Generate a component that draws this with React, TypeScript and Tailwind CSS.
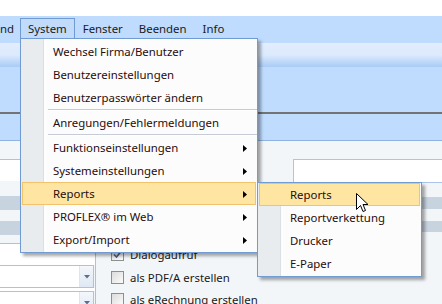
const font = { fontFamily: '"Noto Sans", "Open Sans", Arial, sans-serif' };

type Item = { label: string; sub?: boolean; active?: boolean; sepBefore?: boolean };

const systemItems: Item[] = [
  { label: "Wechsel Firma/Benutzer" },
  { label: "Benutzereinstellungen" },
  { label: "Benutzerpasswörter ändern" },
  { label: "Anregungen/Fehlermeldungen", sepBefore: true },
  { label: "Funktionseinstellungen", sub: true, sepBefore: true },
  { label: "Systemeinstellungen", sub: true },
  { label: "Reports", sub: true, active: true },
  { label: "PROFLEX® im Web", sub: true },
  { label: "Export/Import", sub: true },
];

const reportItems: Item[] = [
  { label: "Reports", active: true },
  { label: "Reportverkettung" },
  { label: "Drucker" },
  { label: "E-Paper" },
];

function Arrow() {
  return (
    <svg width="4" height="7" viewBox="0 0 4 7" className="absolute right-[8px] top-[8px]">
      <path d="M0 0 L4 3.5 L0 7 Z" fill="#000" />
    </svg>
  );
}

function MenuRow({ item }: { item: Item }) {
  return (
    <>
      {item.sepBefore && (
        <div className="flex h-[2px]">
          <div className="w-[27px]" />
          <div className="flex-1 border-t border-[#c5ccd6] bg-white" />
        </div>
      )}
      <div
        className={
          "relative mx-[1px] flex h-[23px] items-center border pl-[30px] " +
          (item.active ? "border-[#f2c36c] bg-[#fee5a2]" : "border-transparent")
        }
      >
        <span className="text-[11.4px] leading-none text-[#2a0c0c]">{item.label}</span>
        {item.sub && <Arrow />}
      </div>
    </>
  );
}

function Menu({ items, className }: { items: Item[]; className: string }) {
  return (
    <div
      className={
        "absolute border border-[#719bd3] bg-[#fcfcfc] shadow-[3px_3px_3px_rgba(0,0,0,0.35)] " + className
      }
    >
      <div className="absolute bottom-0 left-0 top-0 w-[23px] border-r border-[#dde0e3] bg-[#e9ecee]" />
      <div className="absolute bottom-0 left-[24px] top-0 w-[1px] bg-white" />
      <div className="relative">
        {items.map((item) => (
          <MenuRow key={item.label} item={item} />
        ))}
      </div>
    </div>
  );
}

function Checkbox({ checked }: { checked?: boolean }) {
  return (
    <div className="flex h-[13px] w-[13px] items-center justify-center border border-[#8e8f8f] bg-gradient-to-br from-[#dcdcdc] to-[#fbfbfb]">
      {checked && (
        <svg width="9" height="9" viewBox="0 0 9 9">
          <path d="M1 4.5 L3.5 7 L8 1.5" stroke="#4a5f80" strokeWidth="1.6" fill="none" />
        </svg>
      )}
    </div>
  );
}

function Combo() {
  return (
    <div className="mr-[1px] flex h-[23px] border border-l-0 border-[#a9c3e8] bg-white">
      <div className="flex-1" />
      <div className="flex w-[14px] items-center justify-center border-l border-[#dbe5f3] bg-gradient-to-b from-[#f4f7fb] to-[#dfe8f4]">
        <svg width="6" height="4" viewBox="0 0 6 4">
          <path d="M0 0 H6 L3 3.5 Z" fill="#5a6f90" />
        </svg>
      </div>
    </div>
  );
}

export default function App() {
  return (
    <div className="relative h-[304px] w-[442px] overflow-hidden bg-white" style={font}>
      <div className="h-[16px] bg-white" />

      {/* menu bar */}
      <div className="flex h-[27px] items-start bg-[#bfdbfe] pt-[2px] text-[11.4px] text-[#1a1a1a]">
        <div className="flex h-[21px] w-[20px] items-center">nd</div>
        <div className="flex h-[21px] items-center border border-b-0 border-[#6f9ad2] bg-[#c3dbfb] px-[7px]">System</div>
        <div className="flex h-[21px] items-center px-2">Fenster</div>
        <div className="flex h-[21px] items-center px-2">Beenden</div>
        <div className="flex h-[21px] items-center px-2">Info</div>
      </div>

      {/* toolbar area */}
      <div className="h-[24px] bg-gradient-to-b from-[#e2edfd] via-[#dceafd] to-[#a9cbf6]" />
      <div className="h-[45px] bg-[#bfdbfe]" />
      <div className="h-[2px] bg-[#737373]" />
      <div className="h-[27px] border-b border-[#8fb3e2] bg-[#bfdbfe]" />

      {/* content */}
      <div className="grid h-[162px] grid-cols-[96px_1fr]">
        <div className="flex flex-col border-r border-[#a6c2e9] bg-[#f3f6f9]">
          <div className="h-[18px]" />
          <div className="h-[22px] border-t border-[#a9c3e8] bg-white" />
          <div className="h-[15px]" />
          <div className="h-[14px] bg-[#c8d3e0]" />
          <div className="h-[11px]" />
          <div className="h-[14px] bg-[#c8d3e0]" />
          <div className="h-[8px]" />
          <div className="h-[22px] border-t border-[#a9c3e8] bg-white" />
          <Combo />
          <div className="h-[3px] bg-white" />
          <Combo />
        </div>

        <div className="flex flex-col bg-[#f3f6f9]">
          <div className="h-[18px]" />
          <div className="flex h-[24px]">
            <div className="w-[197px]" />
            <div className="flex-1 border border-r-0 border-[#abc5ea] bg-white" />
          </div>
          <div className="h-[14px]" />
          <div className="h-[12px] bg-[#c8d3e0]" />
          <div className="h-[12px]" />
          <div className="h-[11px] bg-[#c8d3e0]" />
          <div className="h-[16px]" />
          <div className="flex flex-col pl-[15px] text-[11.4px] text-[#1a1a1a]">
            {[
              { label: "Dialogaufruf", checked: true },
              { label: "als PDF/A erstellen" },
              { label: "als eRechnung erstellen" },
            ].map((c) => (
              <div key={c.label} className="flex h-[22.5px] items-start gap-[6px]">
                <Checkbox checked={c.checked} />
                <span className="leading-[13px]">{c.label}</span>
              </div>
            ))}
          </div>
        </div>
      </div>

      {/* open menus */}
      <Menu items={systemItems} className="left-[20px] top-[38px] w-[238px] pb-[1px] pt-[1px]" />
      <Menu items={reportItems} className="left-[257px] top-[182px] w-[165px] pb-[1px]" />

      {/* mouse cursor */}
      <svg width="13" height="21" viewBox="0 0 13 21" className="absolute left-[356px] top-[193px]">
        <path
          d="M0.5 0.5 L0.5 16.5 L4.5 12.5 L7 18.5 L9.5 17.5 L7 11.5 L12 11.5 Z"
          fill="#fff"
          stroke="#000"
          strokeWidth="1"
          strokeLinejoin="miter"
        />
      </svg>
    </div>
  );
}
